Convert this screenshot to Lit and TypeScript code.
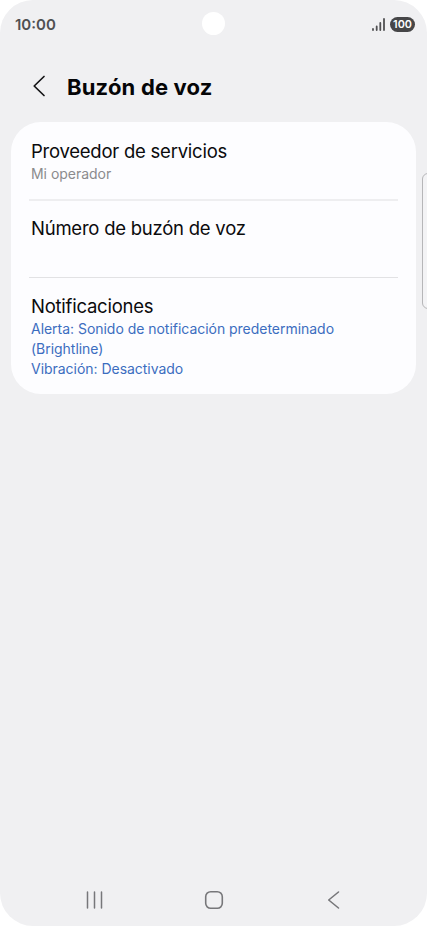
import { LitElement, html, css } from "lit";
import { customElement } from "lit/decorators.js";

@customElement("app-root")
export class AppRoot extends LitElement {
  static styles = css`
    :host {
      display: block;
      width: 427px;
      height: 926px;
      background: #fff;
      font-family: Inter, "Liberation Sans", sans-serif;
      color: #0b0b0d;
    }
    * { box-sizing: border-box; }
    .screen {
      position: relative;
      display: flex;
      flex-direction: column;
      height: 926px;
      border-radius: 33px;
      background: #f0f0f2;
      overflow: hidden;
      white-space: nowrap;
    }
    svg { display: block; fill: none; }
    .status {
      display: grid;
      grid-template-columns: 1fr 23px 1fr;
      align-items: center;
      height: 47px;
      padding: 0 12px 0 15px;
    }
    .clock { font-size: 15px; font-weight: 600; color: #505052; letter-spacing: 0; padding-top: 1px; }
    .camera { width: 23px; height: 23px; border-radius: 50%; background: #fff; margin-left: -1.5px; }
    .indicators { display: flex; justify-content: flex-end; align-items: center; gap: 5px; padding-top: 1px; }
    .battery {
      width: 25px;
      height: 15px;
      border-radius: 7.5px;
      background: #464648;
      color: #fff;
      font-size: 10.8px;
      line-height: 15px;
      font-weight: 600;
      text-align: center;
    }
    header {
      display: flex;
      align-items: center;
      height: 75px;
      padding: 4px 0 0 32px;
      gap: 20px;
    }
    header svg { margin-top: -2px; }
    h1 { margin: 0; font-size: 22px; line-height: 28px; font-weight: 700; letter-spacing: 0.18px; color: #050507; }
    .card {
      width: 405px;
      height: 272px;
      margin-left: 11px;
      padding: 0 18px;
      border-radius: 30px;
      background: #fdfdff;
    }
    .row { height: 77px; padding: 16px 2px 0; border-bottom: 1px solid #e2e2e4; }
    .row:first-child { height: 79px; padding-top: 17px; border-bottom: 2px solid #eeeef0; }
    .row:nth-child(2) { padding-top: 15px; }
    .row:last-child { border: 0; }
    .label { font-size: 18.5px; line-height: 25px; letter-spacing: -0.24px; }
    .detail { font-size: 14px; line-height: 20px; letter-spacing: -0.03px; color: #8b8b8d; }
    .blue { color: #3c6dc0; }
    .edge {
      position: absolute;
      left: 422px;
      top: 173px;
      width: 12px;
      height: 136px;
      border: 1.5px solid #b6b6b8;
      border-radius: 6px;
      background: #f3f3f5;
    }
    nav {
      display: flex;
      align-items: center;
      justify-content: space-between;
      margin-top: auto;
      height: 52px;
      padding: 0 85px;
    }
  `;

  render() {
    return html`
      <div class="screen">
        <div class="status">
          <span class="clock">10:00</span>
          <span class="camera"></span>
          <div class="indicators">
            <svg width="13" height="15" viewBox="0 0 13 15" stroke="#505052" stroke-width="1.8" stroke-linecap="round">
              <path d="M1 12v1M4.7 9.5v3.5M8.3 6v7M12 2v11" />
            </svg>
            <span class="battery">100</span>
          </div>
        </div>
        <header>
          <svg width="15" height="22" viewBox="0 0 15 22" stroke="#151517" stroke-width="1.7" stroke-linecap="round" stroke-linejoin="round">
            <path d="M12 1.5L2.2 11L12 20.5" />
          </svg>
          <h1>Buzón de voz</h1>
        </header>
        <main class="card">
          <section class="row">
            <div class="label">Proveedor de servicios</div>
            <div class="detail">Mi operador</div>
          </section>
          <section class="row">
            <div class="label">Número de buzón de voz</div>
          </section>
          <section class="row">
            <div class="label">Notificaciones</div>
            <div class="detail blue">Alerta: Sonido de notificación predeterminado<br />(Brightline)<br />Vibración: Desactivado</div>
          </section>
        </main>
        <div class="edge"></div>
        <nav>
          <svg width="20" height="20" viewBox="0 0 20 20" stroke="#77777a" stroke-width="1.5" stroke-linecap="round">
            <path d="M2.5 2v16M9.5 2v16M16.5 2v16" />
          </svg>
          <svg width="20" height="20" viewBox="0 0 20 20" stroke="#77777a" stroke-width="1.6">
            <rect x="1.7" y="1.7" width="16.6" height="16.6" rx="5" />
          </svg>
          <svg width="20" height="20" viewBox="0 0 20 20" stroke="#77777a" stroke-width="1.6" stroke-linecap="round" stroke-linejoin="round">
            <path d="M16.5 2L6.7 10L16.5 18" />
          </svg>
        </nav>
      </div>
    `;
  }
}
